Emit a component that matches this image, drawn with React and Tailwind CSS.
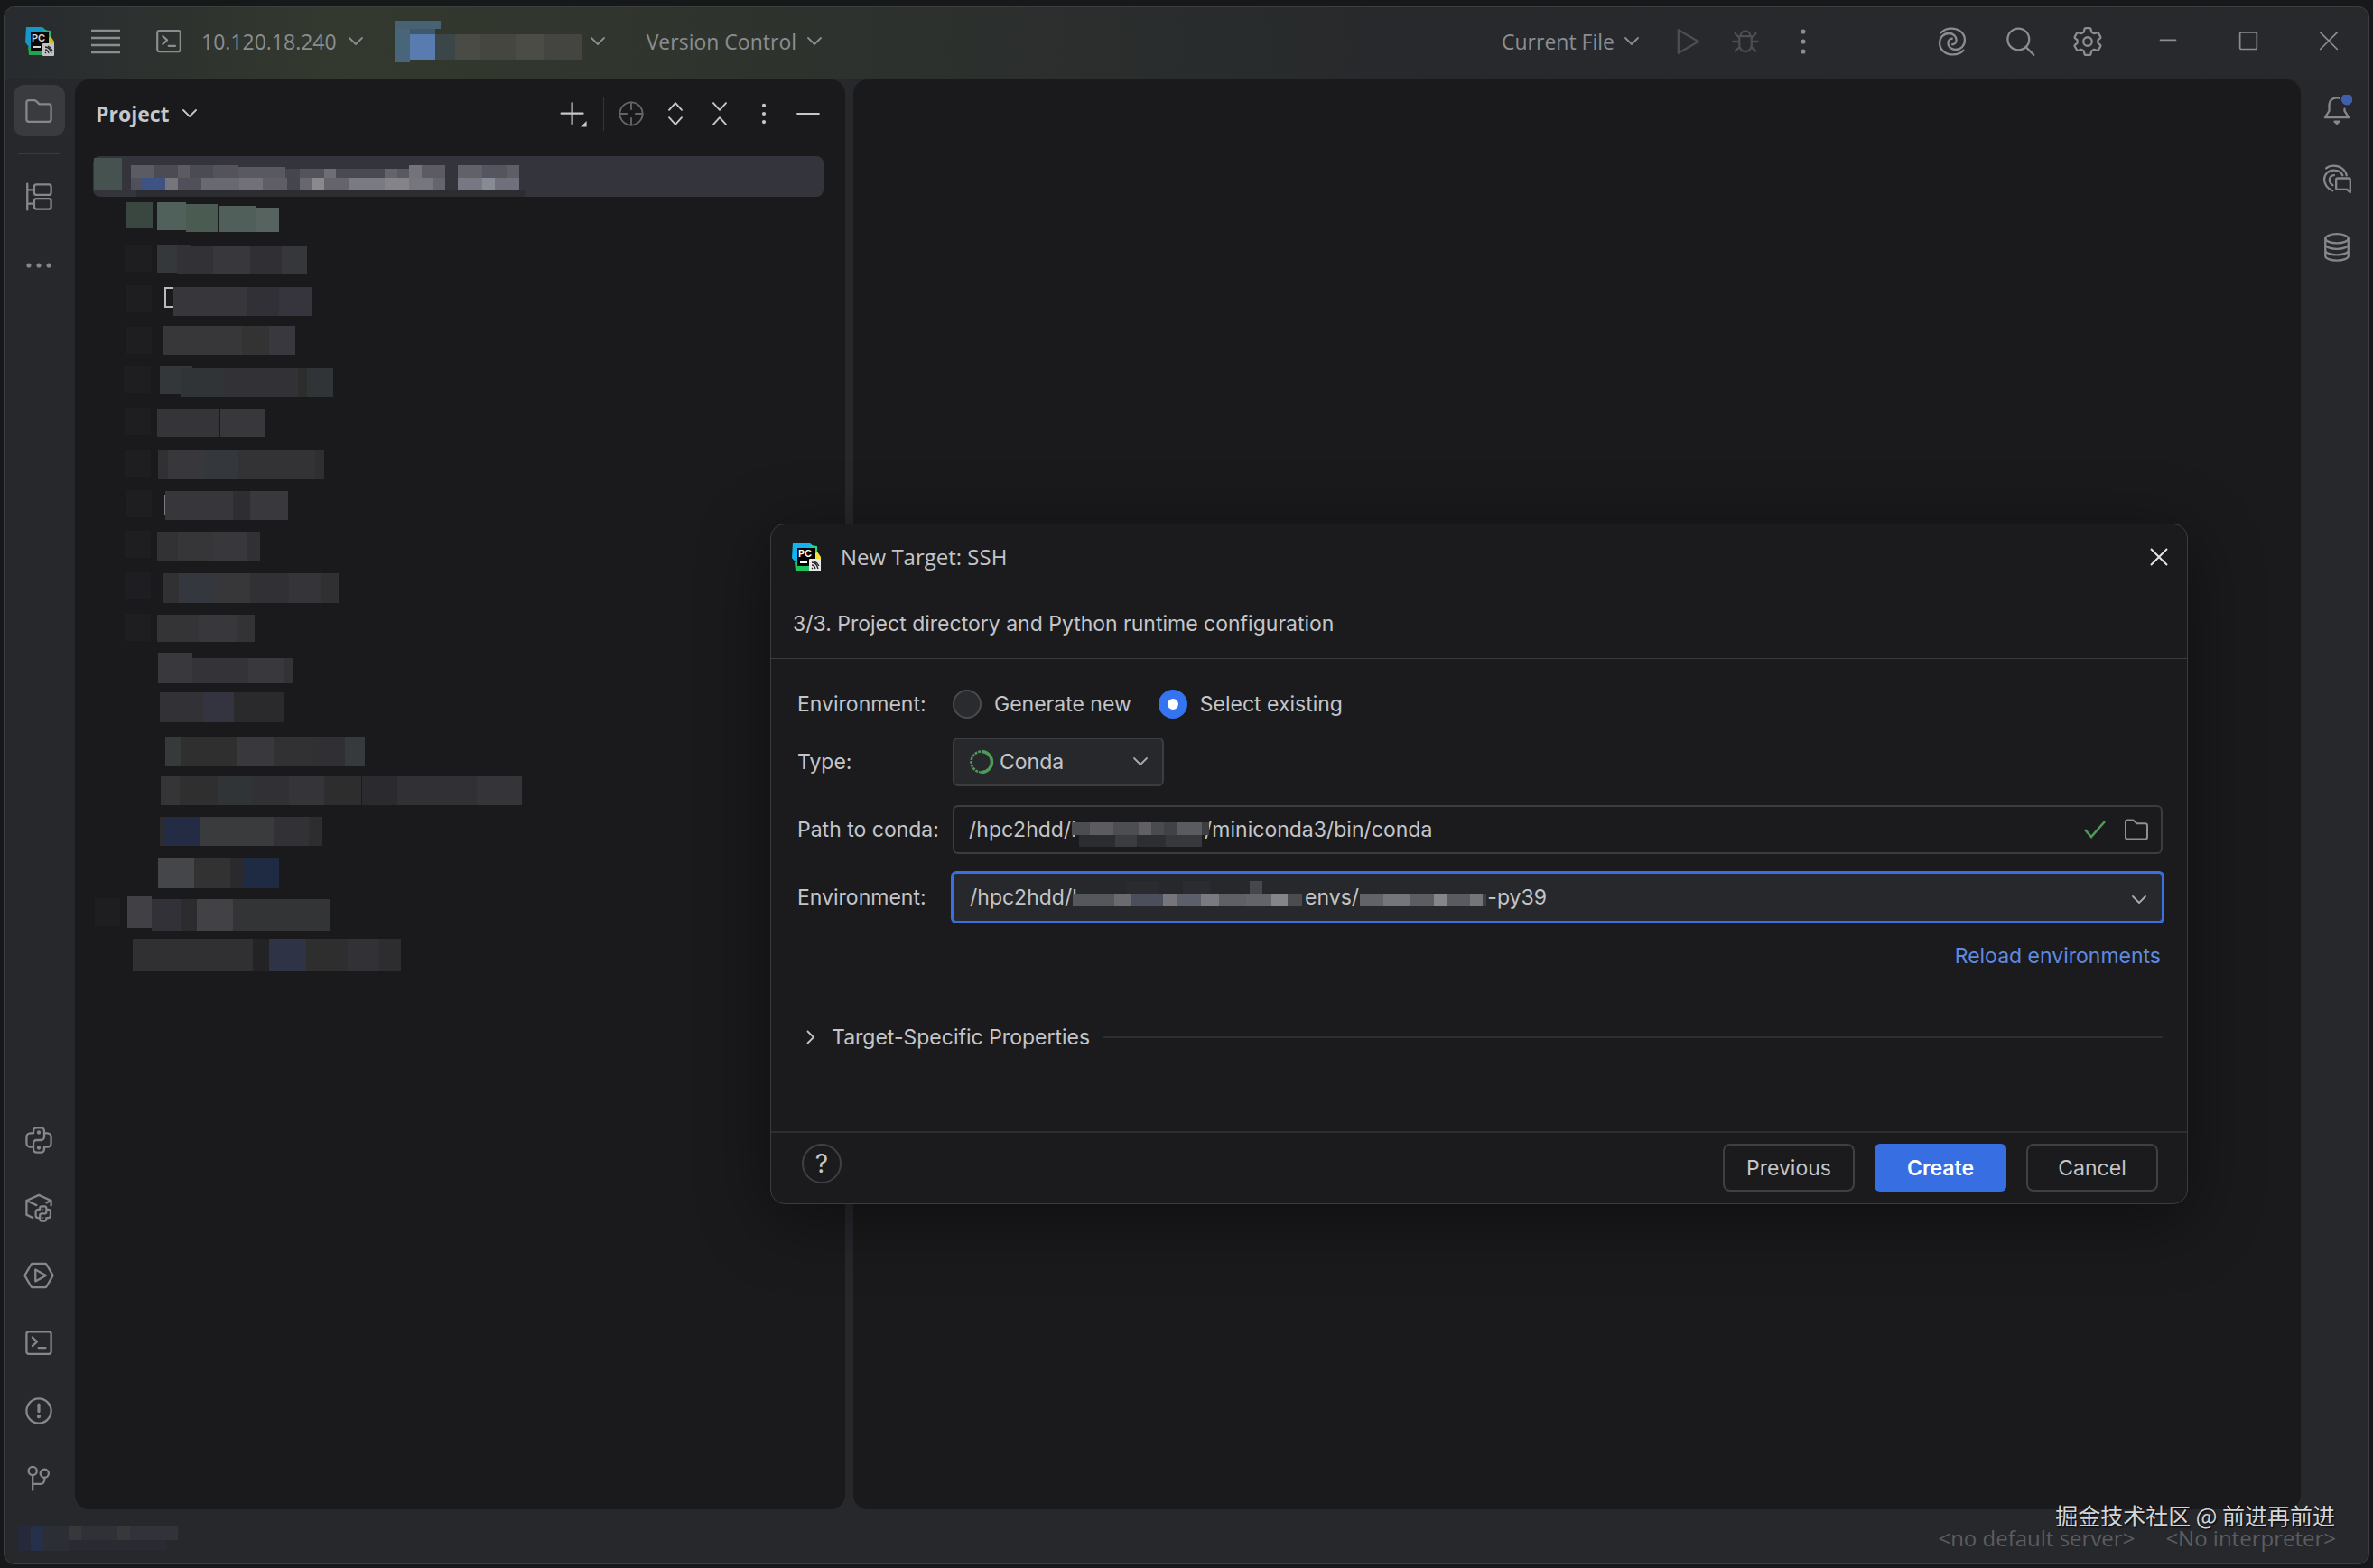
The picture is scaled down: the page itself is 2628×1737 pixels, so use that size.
import React from "react";

/* ===== ICONS ===== */

function Icon({ className = "size-[34px]", box = 20, children }) {
  return (
    <svg
      className={`${className} shrink-0`}
      viewBox={`0 0 ${box} ${box}`}
      fill="none"
      stroke="currentColor"
      strokeWidth="1.35"
      strokeLinecap="round"
      strokeLinejoin="round"
      aria-hidden="true"
    >
      {children}
    </svg>
  );
}

function Chevron({ className = "text-[#8b8d90]" }) {
  return (
    <svg className={`w-4 h-[10px] shrink-0 ${className}`} viewBox="0 0 16 10" fill="none" stroke="currentColor" strokeWidth="1.8" strokeLinecap="round" strokeLinejoin="round" aria-hidden="true">
      <path d="M1 1l7 7 7-7" />
    </svg>
  );
}

function ProductLogo({ className = "" }) {
  return (
    <svg className={`size-8 shrink-0 ${className}`} viewBox="0 0 32 32" aria-hidden="true">
      <path d="M1 0h18l6 5-3 18L4 22 0 17z" fill="#12b3ee" />
      <path d="M19 3l9 1v10l-4 10-20-2v9h16l10-14z" fill="#21d789" />
      <path d="M28 10l4 6v8l-6 4-2-14z" fill="#f0e13c" />
      <path d="M3 22l20-2-2 11H4z" fill="#1fc35c" />
      <rect x="6" y="6" width="20" height="20" fill="#000" />
      <text x="7" y="16" fontSize="11" fontWeight="600" fontFamily="Inter, sans-serif" fill="#fff">PC</text>
      <rect x="9" y="21" width="8" height="2" fill="#fff" />
      <rect x="19" y="18" width="13" height="14" rx="1" fill="#e8e8ea" />
      <path d="M22 22c4 0 6 3 7 7M22 25c3 0 3 2 4 4M22 28l1 1M25 21c3 1 4 3 5 5" stroke="#222" strokeWidth="1.3" fill="none" />
    </svg>
  );
}

function FolderIcon({ className }) {
  return (
    <Icon className={className}>
      <path d="M2 15.5v-11A1.5 1.5 0 0 1 3.5 3h3.600c.4 0 .8.2 1.1.5L10.300 5.500h6.200A1.500 1.500 0 0 1 18 7v8.500a1.500 1.500 0 0 1-1.500 1.500h-13A1.500 1.500 0 0 1 2 15.500z" />
    </Icon>
  );
}

function StructureIcon() {
  return (
    <Icon>
      <rect x="7" y="2" width="11" height="6.800" rx="1.500" />
      <rect x="7" y="11.200" width="11" height="6.800" rx="1.500" />
      <path d="M2.500 1.500v17M2.500 5.500H7M2.500 14.500H7" />
    </Icon>
  );
}

const snake =
  "M6.500 5.500V4A2 2 0 0 1 8.500 2h3a2 2 0 0 1 2 2v4a2 2 0 0 1-2 2h-3a2 2 0 0 0-2 2v2.500H4.500a2.500 2.500 0 0 1-2.500-2.500V8a2.500 2.500 0 0 1 2.500-2.500zM13.500 5.500h2A2.500 2.500 0 0 1 18 8v4a2.500 2.500 0 0 1-2.500 2.500h-2V16a2 2 0 0 1-2 2h-3a2 2 0 0 1-2-2v-1.500";

function PythonIcon() {
  return (
    <Icon>
      <path d={snake} />
      <circle cx="10" cy="5" r=".6" fill="currentColor" />
      <circle cx="10" cy="15" r=".6" fill="currentColor" />
    </Icon>
  );
}

function PackagesIcon() {
  return (
    <Icon>
      <path d="M6 16.500l-4-2V5.300l8-3.600 8 3.600v3.200M2 5.300l6.500 3M18 5.300l-3 1.400" />
      <g transform="translate(6.800 7.800) scale(.6)" strokeWidth="2.200">
        <path d={snake} />
        <circle cx="10" cy="5.500" r=".7" fill="currentColor" stroke="none" />
        <circle cx="10" cy="14.500" r=".7" fill="currentColor" stroke="none" />
      </g>
    </Icon>
  );
}

function ServicesIcon() {
  return (
    <Icon>
      <path d="M5.900 2.300h8.200c.3 0 .7.2.9.500l3.900 6.700c.2.300.2.700 0 1L15 17.200c-.2.300-.6.500-.9.500H5.900c-.3 0-.7-.2-.9-.500L1.100 10.500c-.2-.3-.2-.7 0-1L5 2.800c.2-.3.600-.5.900-.5z" />
      <path d="M7.800 6.200v7.600l6.800-3.800z" />
    </Icon>
  );
}

function TerminalIcon({ className }) {
  return (
    <Icon className={className}>
      <rect x="2" y="2.500" width="16" height="14.500" rx="1.500" />
      <path d="M5.800 6.200l3 2.800-3 2.800M9.800 13h4.600" />
    </Icon>
  );
}

function ProblemsIcon() {
  return (
    <Icon>
      <circle cx="10" cy="10" r="8" />
      <path d="M10 6v4.300" strokeWidth="1.900" />
      <circle cx="10" cy="13.600" r=".6" fill="currentColor" />
    </Icon>
  );
}

function BranchIcon() {
  return (
    <Icon>
      <circle cx="6" cy="5" r="2.700" />
      <circle cx="13.700" cy="6.600" r="2.700" />
      <path d="M6 7.700V17.500M6 13.500h5a2.700 2.700 0 0 0 2.700-2.700V9.300" />
    </Icon>
  );
}

function DotsIcon({ vertical, className }) {
  return (
    <Icon className={className}>
      <g fill="currentColor" stroke="none">
        {[3.500, 10, 16.500].map((p) => (
          <circle key={p} cx={vertical ? 10 : p} cy={vertical ? p : 10} r="1.500" />
        ))}
      </g>
    </Icon>
  );
}

const swirlArm = "M2.700 4.300C4.300 2.500 6.700 1.500 9.500 1.500c5 0 8.700 3.200 8.700 7.500 0 3.600-2.600 6.300-6 6.300-2.900 0-4.900-1.900-4.900-4.300 0-1.700 1.100-2.900 2.600-2.900";

function SwirlIcon() {
  return (
    <Icon>
      <path d={swirlArm} />
      <path d={swirlArm} transform="rotate(180 10 10)" />
    </Icon>
  );
}

function AiChatIcon() {
  return (
    <Icon>
      <path d="M3 3.200C4.300 2.100 6 1.600 8 1.600c4.200 0 7.500 2.400 8.300 6.200" />
      <path d="M7.200 17.800C4 16.700 1.800 13.700 1.800 10.500c0-3.500 2.700-6 6.200-6 2.800 0 4.900 1.400 5.700 3.300" />
      <path d="M7.300 14.200C6 13.500 5.200 12.200 5.200 10.800c0-1.800 1.300-3.100 3-3.100" />
      <path d="M10.500 9.700h7.200c.6 0 1 .4 1 1v8.200l-2.200-1.900h-6c-.6 0-1-.4-1-1v-5.300c0-.6.400-1 1-1z" />
    </Icon>
  );
}

function BellIcon() {
  return (
    <Icon>
      <path d="M11.500 2.200C7.500 1.200 5 3.800 5 7v3.500l-2.700 4.300h15.400L15 10.500V9.200" />
      <path d="M8.500 17.500h3l-1.500 1.300z" fill="currentColor" />
      <circle cx="16.500" cy="3" r="3.700" fill="#4060ab" stroke="none" />
    </Icon>
  );
}

function DatabaseIcon() {
  return (
    <Icon>
      <ellipse cx="10" cy="4.300" rx="7.500" ry="3" />
      <path d="M2.500 4.300v11.400c0 1.600 3.400 2.900 7.500 2.900s7.500-1.300 7.500-2.900V4.300M2.500 8.200c0 1.600 3.400 2.900 7.500 2.900s7.500-1.300 7.500-2.900M2.500 12c0 1.600 3.400 2.900 7.500 2.900s7.500-1.300 7.500-2.900" />
    </Icon>
  );
}

function GearIcon() {
  return (
    <Icon>
      <circle cx="10" cy="10" r="2.800" />
      <path d="M8.600 1.200h2.800c.3 0 .5.200.6.500l.5 2.100 1.700 1 2.100-.6c.3-.1.6 0 .7.300l1.400 2.400c.1.300.1.600-.1.800L16.700 9.100v1.800l1.600 1.400c.2.200.2.500.1.800L17 15.500c-.1.300-.4.400-.7.300l-2.100-.6-1.700 1-.5 2.100c-.1.300-.3.500-.6.500H8.600c-.3 0-.5-.2-.6-.5l-.5-2.100-1.700-1-2.100.6c-.3.100-.6 0-.7-.3l-1.400-2.400c-.1-.3-.1-.6.1-.8l1.600-1.400V9.100L1.700 7.700c-.2-.2-.2-.5-.1-.8L3 4.500c.1-.3.4-.4.700-.3l2.100.6 1.700-1L8 1.700c.1-.3.300-.5.600-.5z" />
    </Icon>
  );
}

function BugIcon() {
  return (
    <Icon>
      <path d="M7 6.200a3 3 0 0 1 6 0M6 6.500h8v6a4 4 0 0 1-8 0zM6 10H2M18 10h-4M6 7.500L3.200 4.700M14 7.500l2.800-2.800M6.300 13.500l-3 2.700M13.700 13.500l3 2.700" />
    </Icon>
  );
}

function IconButton({ label, children, className = "" }) {
  return (
    <button type="button" aria-label={label} title={label} className={`flex shrink-0 items-center justify-center ${className}`}>
      {children}
    </button>
  );
}

/* ===== PIXELATED NAMES ===== */

// cells: [x, y, width, height, fill]
function Mosaic({ width, height, cells, className = "" }) {
  return (
    <svg className={`shrink-0 ${className}`} width={width} height={height} viewBox={`0 0 ${width} ${height}`} shapeRendering="crispEdges" aria-hidden="true">
      {cells.map(([x, y, w, h, fill], i) => (
        <rect key={i} x={x} y={y} width={w} height={h} fill={fill} />
      ))}
    </svg>
  );
}

const faint = "#1e1e20";

const treeRows = [
  [
    [37, 6, 29, 29, "#3a4741"],
    [71, 6, 32, 31, "#50605a"], [103, 8, 35, 31, "#4a5c52"], [139, 10, 41, 29, "#515f5a"], [180, 12, 26, 27, "#56635e"],
  ],
  [
    [35, 7, 30, 30, faint],
    [71, 7, 22, 31, "#35383b"], [93, 7, 16, 32, "#323236"], [109, 9, 24, 30, "#323236"], [133, 9, 41, 30, "#38373c"], [174, 9, 35, 30, "#302f34"], [209, 9, 28, 30, "#35373b"],
  ],
  [
    [36, 7, 29, 30, faint],
    [79, 9, 10, 2, "#b9babd"], [79, 9, 2, 23, "#b9babd"], [79, 30, 10, 2, "#b9babd"],
    [89, 9, 82, 32, "#37363b"], [171, 9, 35, 32, "#313036"], [206, 9, 36, 32, "#36353e"],
  ],
  [
    [36, 7, 29, 30, faint],
    [77, 6, 88, 32, "#37373a"], [165, 6, 30, 32, "#333334"], [195, 6, 29, 32, "#39383e"],
  ],
  [
    [34, 5, 30, 30, faint],
    [74, 5, 36, 32, "#34373a"], [98, 8, 46, 32, "#313437"], [144, 8, 83, 32, "#323236"], [227, 8, 10, 32, "#2c2d2d"], [237, 8, 29, 32, "#313436"],
  ],
  [
    [35, 7, 29, 30, faint],
    [71, 8, 68, 31, "#353438"], [141, 8, 50, 31, "#38373b"],
  ],
  [
    [35, 7, 29, 30, faint],
    [72, 8, 11, 32, "#313134"], [83, 8, 40, 32, "#38383c"], [123, 8, 38, 32, "#34373b"], [161, 8, 85, 32, "#333336"], [246, 8, 10, 32, "#2f2f31"],
  ],
  [
    [36, 7, 29, 30, faint],
    [79, 12, 1, 23, "#7a7b7d"], [80, 8, 75, 32, "#37363a"], [155, 8, 19, 32, "#2e2d32"], [174, 8, 42, 32, "#39383c"],
  ],
  [
    [35, 6, 29, 30, "#1e1e21"],
    [71, 7, 23, 32, "#323234"], [94, 7, 39, 32, "#363638"], [133, 7, 38, 32, "#38373b"], [171, 7, 14, 32, "#313135"],
  ],
  [
    [35, 7, 29, 30, "#1e1e22"],
    [77, 8, 18, 33, "#313133"], [95, 8, 41, 33, "#34373d"], [136, 8, 38, 33, "#373739"], [174, 8, 43, 33, "#313135"], [217, 8, 36, 33, "#353438"], [253, 8, 19, 33, "#303032"],
  ],
  [
    [35, 8, 29, 30, faint],
    [71, 9, 46, 30, "#343436"], [117, 9, 42, 30, "#38373b"], [159, 9, 20, 30, "#333336"],
  ],
  [
    [72, 5, 38, 34, "#39383d"], [110, 11, 62, 28, "#343338"], [172, 11, 39, 28, "#39383d"], [211, 11, 11, 28, "#333235"],
  ],
  [
    [74, 4, 48, 33, "#323236"], [122, 4, 34, 33, "#33343f"], [156, 4, 56, 33, "#2a2a2c"],
  ],
  [
    [80, 7, 17, 33, "#363a3b"], [97, 7, 62, 33, "#2f2f30"], [159, 7, 41, 33, "#39383c"], [200, 7, 44, 33, "#313133"], [244, 7, 35, 33, "#302f33"], [279, 7, 22, 33, "#373a3d"],
  ],
  [
    [75, 6, 21, 32, "#353437"], [96, 6, 42, 32, "#2f2f2f"], [138, 6, 38, 32, "#303436"], [176, 6, 41, 32, "#303035"], [217, 6, 39, 32, "#353438"], [256, 6, 41, 32, "#2d2d2e"], [298, 6, 39, 32, "#2b2a2e"], [337, 6, 88, 32, "#313035"], [425, 6, 50, 32, "#353439"],
  ],
  [
    [74, 6, 4, 32, "#2c2c2d"], [78, 6, 41, 32, "#232b45"], [119, 6, 81, 32, "#3a3b3c"], [200, 6, 39, 32, "#323136"], [239, 6, 15, 32, "#2d2c2f"],
  ],
  [
    [72, 6, 40, 33, "#454649"], [112, 6, 40, 33, "#323233"], [152, 6, 15, 33, "#2a2a2e"], [167, 6, 39, 33, "#1f2b42"],
  ],
  [
    [2, 5, 28, 31, "#1e1e20"],
    [38, 3, 27, 35, "#414045"], [65, 6, 32, 35, "#323137"], [97, 6, 18, 35, "#2c2c2f"], [115, 6, 40, 35, "#424145"], [155, 6, 108, 35, "#323436"],
  ],
  [
    [44, 4, 133, 36, "#302f32"], [177, 4, 18, 36, "#232325"], [195, 4, 41, 36, "#2f3346"], [236, 4, 46, 36, "#2e2e2f"], [282, 4, 35, 36, "#323135"], [317, 4, 24, 36, "#2d2d2f"],
  ],
];

const rootCells = [
  [48, 37, 430, 8, "#2c2d31"],
  [1, 2, 31, 36, "#45524f"],
  [42, 10, 25, 14, "#5b5b62"], [67, 10, 27, 14, "#4c4b54"], [94, 10, 13, 14, "#5c5b61"], [107, 10, 26, 14, "#4b4b53"], [133, 10, 28, 14, "#54535b"], [161, 12, 52, 12, "#5a5962"], [213, 14, 16, 10, "#47464d"], [229, 14, 27, 10, "#54545a"], [256, 14, 13, 10, "#6f6e76"], [269, 14, 54, 10, "#4b4a52"], [323, 14, 14, 10, "#65646d"], [337, 14, 13, 10, "#5a5961"], [350, 10, 14, 14, "#74737a"], [364, 10, 26, 14, "#5c5b63"], [404, 10, 27, 14, "#61616a"], [431, 10, 27, 14, "#55555f"], [458, 10, 14, 14, "#5e5e67"],
  [42, 24, 11, 13, "#50505a"], [53, 24, 27, 13, "#3f5286"], [80, 24, 14, 13, "#76757b"], [94, 24, 26, 13, "#51505a"], [120, 24, 42, 13, "#696971"], [162, 24, 26, 13, "#72717a"], [188, 24, 27, 13, "#5f5e67"], [215, 24, 14, 13, "#45454d"], [229, 24, 14, 13, "#68676f"], [243, 24, 13, 13, "#8a898e"], [256, 24, 27, 13, "#65646d"], [283, 24, 40, 13, "#7a7a82"], [323, 24, 27, 13, "#84838a"], [350, 24, 26, 13, "#76767e"], [376, 24, 14, 13, "#64656f"], [404, 24, 27, 13, "#777883"], [431, 24, 14, 13, "#888b94"], [445, 24, 27, 13, "#6f707b"],
];

const projectCells = [
  [0, 0, 50, 9, "#466273"], [0, 9, 16, 37, "#48657a"], [16, 15, 28, 28, "#587caf"], [16, 9, 28, 6, "#3f596a"], [44, 15, 22, 28, "#3a4647"],
  [66, 15, 28, 28, "#4a4b45"], [94, 15, 40, 28, "#454640"], [134, 15, 30, 28, "#4c4c47"], [164, 15, 42, 28, "#444540"],
];

const condaCells = [
  [0, 0, 20, 14, "#4c4d50"], [20, 0, 26, 14, "#5b5b60"], [46, 0, 28, 14, "#4d4e52"], [74, 0, 14, 14, "#606065"], [88, 0, 14, 14, "#4a4b4f"], [102, 0, 14, 14, "#414246"], [116, 0, 28, 14, "#5a5b60"], [144, 0, 8, 14, "#3d3e42"],
  [8, 14, 40, 13, "#2b2c2f"], [48, 14, 24, 13, "#3b3c3f"], [72, 14, 32, 13, "#2d2e31"], [104, 14, 40, 13, "#37383b"],
];

const envCells = [
  [60, -14, 36, 14, "#2a2b2f"], [122, -14, 30, 14, "#2b2c31"], [196, -14, 14, 14, "#46474d"],
  [0, 0, 46, 14, "#56575c"], [46, 0, 18, 14, "#6a6a6f"], [64, 0, 36, 14, "#4b4f5b"], [100, 0, 16, 14, "#75767c"], [116, 0, 26, 14, "#5a5f69"], [142, 0, 20, 14, "#7a7b80"], [162, 0, 30, 14, "#5f6066"], [192, 0, 28, 14, "#63646a"], [220, 0, 18, 14, "#84858a"], [238, 0, 16, 14, "#4b4c50"],
];

const envNameCells = [
  [0, 0, 26, 14, "#626369"], [26, 0, 30, 14, "#75767b"], [56, 0, 26, 14, "#5c5d63"], [82, 0, 14, 14, "#85868a"], [96, 0, 26, 14, "#5a5b61"], [122, 0, 14, 14, "#74757a"], [136, 0, 4, 14, "#3d3e42"],
];

const statusCells = [
  [0, 0, 14, 28, "#26293a"], [14, 0, 14, 28, "#27304a"], [28, 0, 28, 28, "#2c2e36"], [56, 0, 14, 16, "#37383b"], [70, 0, 40, 16, "#303136"], [110, 0, 14, 16, "#37383a"], [124, 0, 53, 16, "#32333a"], [56, 16, 108, 12, "#2a2b32"],
];

/* ===== DIALOG ===== */

function NewTargetDialog() {
  return (
    <section
      role="dialog"
      aria-labelledby="dialog-title"
      className="absolute left-[853px] right-[205px] top-[580px] flex flex-col rounded-2xl border border-[#3a3b3e] bg-[#1b1b1d] text-[23px] leading-[30px] text-[#c3c5c9] shadow-[0_16px_80px_rgba(0,0,0,0.45)]"
    >
      <header className="flex h-[72px] items-center pl-[23px] pr-5">
        <ProductLogo />
        <h2 id="dialog-title" className="ml-[22px] font-['Open_Sans','Noto_Sans',sans-serif] text-2xl">New Target: SSH</h2>
        <IconButton label="Close" className="ml-auto text-[#e4e5e7]">
          <svg className="size-[22px]" viewBox="0 0 22 22" fill="none" stroke="currentColor" strokeWidth="2" aria-hidden="true">
            <path d="M2 2l18 18M20 2L2 20" />
          </svg>
        </IconButton>
      </header>
      <div className="flex h-[77px] items-center border-b border-[#3a3b3e] pl-6">
        <p>3/3. Project directory and Python runtime configuration</p>
      </div>

      <form className="pl-[29px] pr-[27px] pt-[34px]">
        <div className="grid grid-cols-[172px_1fr] items-center gap-y-[21px]">
          {/* Environment mode */}
          <span id="env-mode">Environment:</span>
          <div role="radiogroup" aria-labelledby="env-mode" className="flex items-center gap-[30px]">
            <label className="flex items-center gap-[14px]">
              <input type="radio" name="mode" className="size-8 appearance-none rounded-full border-2 border-[#4a4b4f] bg-[#2a2b2e]" />
              Generate new
            </label>
            <label className="flex items-center gap-[14px]">
              <input type="radio" name="mode" defaultChecked className="size-8 appearance-none rounded-full border-[10px] border-[#3574f0] bg-white" />
              Select existing
            </label>
          </div>

          {/* Type */}
          <label htmlFor="env-type">Type:</label>
          <div className="relative w-[234px]">
            <select id="env-type" className="h-[54px] w-full appearance-none rounded-md border-2 border-[#3c3d41] bg-[#27282c] pl-[50px]">
              <option>Conda</option>
            </select>
            <svg className="pointer-events-none absolute left-[18px] top-[13px] size-7" viewBox="0 0 28 28" fill="none" stroke="#4f9a5a" aria-hidden="true">
              <path d="M14 2.500a11.500 11.500 0 0 1 0 23" strokeWidth="3.500" />
              <path d="M14 25.500a11.500 11.500 0 0 1 0-23" strokeWidth="2.500" strokeDasharray="3 1" />
            </svg>
            <Chevron className="pointer-events-none absolute right-[18px] top-[22px] text-[#a8aaae]" />
          </div>

          {/* Path to conda */}
          <label htmlFor="conda-path">Path to conda:</label>
          <div className="relative">
            <input
              id="conda-path"
              type="text"
              defaultValue={"/hpc2hdd/l" + "\u00a0".repeat(22) + "/miniconda3/bin/conda"}
              className="h-[54px] w-full rounded-md border-2 border-[#3c3d41] bg-transparent pl-4 pr-24 outline-none"
            />
            <Mosaic width={152} height={28} cells={condaCells} className="pointer-events-none absolute left-[132px] top-[19px]" />
            <div className="absolute right-[14px] top-3 flex items-center gap-[18px] text-[#8d8f93]">
              <svg className="h-[22px] w-[26px] text-[#4f9a5a]" viewBox="0 0 26 22" fill="none" stroke="currentColor" strokeWidth="2.600" aria-hidden="true">
                <path d="M2 11l7 8L24 2" />
              </svg>
              <IconButton label="Browse"><FolderIcon className="size-[30px]" /></IconButton>
            </div>
          </div>

          {/* Conda environment */}
          <label htmlFor="conda-env">Environment:</label>
          <div className="relative">
            <select id="conda-env" className="h-[54px] w-full appearance-none rounded-sm border border-[#3871e1] bg-[#27282c] pl-[18px] ring-2 ring-[#3871e1]">
              <option>{"/hpc2hdd/l" + "\u00a0".repeat(39) + "envs/" + "\u00a0".repeat(22) + "-py39"}</option>
            </select>
            <Mosaic width={254} height={14} cells={envCells} className="pointer-events-none absolute left-[133px] top-[23px] overflow-visible" />
            <Mosaic width={140} height={14} cells={envNameCells} className="pointer-events-none absolute left-[451px] top-[23px]" />
            <Chevron className="pointer-events-none absolute right-[18px] top-[25px] text-[#a8aaae]" />
          </div>
        </div>

        <div className="mt-[23px] flex justify-end">
          <a href="#reload" className="pr-[2px] text-[#5f8ae0]">Reload environments</a>
        </div>

        <div className="mt-[60px] flex items-center">
          <button type="button" aria-expanded="false" className="flex items-center gap-[18px] pl-[10px]">
            <svg className="h-4 w-[10px]" viewBox="0 0 10 16" fill="none" stroke="currentColor" strokeWidth="1.800" aria-hidden="true">
              <path d="M1 1l7 7-7 7" />
            </svg>
            Target-Specific Properties
          </button>
          <div className="ml-[14px] h-[2px] flex-1 bg-[#2d2e31]" />
        </div>
      </form>

      <footer className="mt-[89px] flex items-start gap-[22px] border-t-2 border-[#2d2e31] pb-[13px] pl-[34px] pr-8 pt-3">
        <button type="button" aria-label="Help" className="mr-auto size-11 rounded-full border-2 border-[#3f4044] text-[28px] leading-10">?</button>
        <button type="button" className="h-[53px] w-[146px] rounded-lg border-2 border-[#3f4044]">Previous</button>
        <button type="button" className="h-[53px] w-[146px] rounded-md bg-[#376fe3] font-semibold text-white">Create</button>
        <button type="button" className="h-[53px] w-[146px] rounded-lg border-2 border-[#3f4044]">Cancel</button>
      </footer>
    </section>
  );
}

/* ===== MAIN WINDOW ===== */

function TitleBar() {
  return (
    <header className="flex h-20 shrink-0 items-center rounded-t-xl bg-linear-to-r from-[#282b2f] via-[#33392e] via-14% to-[#27292c] to-60% pb-1 pl-[23px] pr-[27px] font-['Open_Sans','Noto_Sans',sans-serif] text-[23px] text-[#8b8d90]">
      <ProductLogo className="opacity-80" />
      <IconButton label="Main menu" className="ml-[41px]">
        <svg className="h-7 w-8" viewBox="0 0 32 28" stroke="currentColor" strokeWidth="2.500" aria-hidden="true">
          <path d="M0 2h32M0 10h32M0 18h32M0 26h32" />
        </svg>
      </IconButton>
      <button type="button" className="ml-[38px] flex items-center">
        <TerminalIcon className="size-8" />
        <span className="ml-5">10.120.18.240</span>
        <Chevron className="ml-[13px]" />
      </button>
      <button type="button" aria-label="Project" className="ml-9 flex items-center gap-[10px]">
        <Mosaic width={206} height={46} cells={projectCells} />
        <Chevron />
      </button>
      <button type="button" className="ml-[46px] flex items-center gap-3">
        Version Control
        <Chevron />
      </button>

      <button type="button" className="ml-auto flex items-center gap-[11px]">
        Current File
        <Chevron />
      </button>
      <div className="ml-[37px] flex gap-[30px]">
        <IconButton label="Run" className="text-[#4c4e51]">
          <Icon><path d="M4 2.500v15L17 10z" /></Icon>
        </IconButton>
        <IconButton label="Debug" className="text-[#4c4e51]"><BugIcon /></IconButton>
        <IconButton label="More actions"><DotsIcon vertical /></IconButton>
      </div>
      <div className="ml-[131px] flex gap-[41px]">
        <IconButton label="AI Assistant"><SwirlIcon /></IconButton>
        <IconButton label="Search">
          <Icon><circle cx="9" cy="8.500" r="7" /><path d="M14 13.700l5 5" /></Icon>
        </IconButton>
        <IconButton label="Settings"><GearIcon /></IconButton>
      </div>
      <div className="ml-[55px] flex gap-[55px]">
        <IconButton label="Minimize"><Icon><path d="M5 9h10" strokeWidth="1" /></Icon></IconButton>
        <IconButton label="Maximize"><Icon><rect x="4.500" y="4" width="11" height="11" rx="1" strokeWidth="1" /></Icon></IconButton>
        <IconButton label="Close window"><Icon><path d="M4.500 4l11 11M15.500 4l-11 11" strokeWidth="1" /></Icon></IconButton>
      </div>
    </header>
  );
}

function ProjectPanel() {
  return (
    <section className="w-[853px] shrink-0 rounded-2xl bg-[#1a1a1c]">
      <div className="flex h-[76px] items-center pl-[23px] pr-[27px] text-[#c6c7ca]">
        <button type="button" className="flex items-center gap-[14px] font-['Open_Sans','Noto_Sans',sans-serif] text-[23px] font-bold">
          Project
          <Chevron className="text-[#c6c7ca]" />
        </button>
        <IconButton label="Add" className="ml-auto">
          <Icon className="size-8">
            <path d="M8.500 2.500v14.500M1 9.800h15" />
            <path d="M18.500 15v4h-4z" fill="currentColor" stroke="none" />
          </Icon>
        </IconButton>
        <div className="ml-4 h-[38px] w-px bg-[#333437]" />
        <div className="ml-4 flex gap-[21px]">
          <IconButton label="Select opened file" className="text-[#63656a]">
            <Icon className="size-7"><circle cx="10" cy="10" r="9" /><path d="M10 1v5.500M10 13.500V19M1 10h5.500M13.500 10H19" /></Icon>
          </IconButton>
          <IconButton label="Expand all">
            <Icon className="size-7"><path d="M5 7l5-5.500L15 7M5 13l5 5.500 5-5.500" /></Icon>
          </IconButton>
          <IconButton label="Collapse all">
            <Icon className="size-7"><path d="M5 1.500L10 7l5-5.500M5 18.500L10 13l5 5.500" /></Icon>
          </IconButton>
          <IconButton label="Options"><DotsIcon vertical className="size-7" /></IconButton>
          <IconButton label="Hide"><Icon className="size-7"><path d="M1.500 10h17" /></Icon></IconButton>
        </div>
      </div>

      {/* Tree */}
      <ul className="mt-[9px] grid h-[908px] auto-rows-fr pl-5 pr-6">
        <li className="rounded-lg bg-[#34353c]">
          <Mosaic width={480} height={45} cells={rootCells} />
        </li>
        {treeRows.map((cells, i) => (
          <li key={i}>
            <Mosaic width={480} height={45} cells={cells} />
          </li>
        ))}
      </ul>
    </section>
  );
}

function App() {
  return (
    <div className="relative flex min-h-screen flex-col bg-[#17181a] px-1 pb-1 pt-[7px] font-['Inter','Noto_Sans_CJK_SC',sans-serif]">
      <div className="flex flex-1 flex-col rounded-xl border border-[#3c3e40] bg-[#27282c]">
        <TitleBar />

        <main className="flex flex-1">
          {/* Left tool bar */}
          <nav className="flex w-[78px] shrink-0 flex-col items-center pb-[17px] pr-[2px] pt-[6px] text-[#85878b]">
            <IconButton label="Project" className="size-[57px] rounded-xl bg-[#3a3b3f]"><FolderIcon /></IconButton>
            <div className="mt-[18px] h-[2px] w-[46px] bg-[#3a3b3f]" />
            <IconButton label="Structure" className="mt-[30px]"><StructureIcon /></IconButton>
            <IconButton label="More tool windows" className="mt-[42px]"><DotsIcon /></IconButton>
            <div className="mt-auto flex flex-col gap-[41px]">
              <IconButton label="Python Console"><PythonIcon /></IconButton>
              <IconButton label="Python Packages"><PackagesIcon /></IconButton>
              <IconButton label="Services"><ServicesIcon /></IconButton>
              <IconButton label="Terminal"><TerminalIcon /></IconButton>
              <IconButton label="Problems"><ProblemsIcon /></IconButton>
              <IconButton label="Version Control"><BranchIcon /></IconButton>
            </div>
          </nav>

          <ProjectPanel />
          <section aria-label="Editor" className="ml-[9px] flex-1 rounded-2xl bg-[#1a1a1c]" />

          {/* Right tool bar */}
          <nav className="flex w-[75px] shrink-0 flex-col items-center gap-[42px] pl-1 pt-[17px] text-[#85878b]">
            <IconButton label="Notifications"><BellIcon /></IconButton>
            <IconButton label="AI Chat"><AiChatIcon /></IconButton>
            <IconButton label="Database"><DatabaseIcon /></IconButton>
          </nav>
        </main>

        {/* Status bar */}
        <footer className="flex h-[60px] shrink-0 items-center pl-[15px] pr-9 pt-1 font-['Open_Sans','Noto_Sans',sans-serif] text-2xl text-[#5b5c60]">
          <Mosaic width={177} height={28} cells={statusCells} />
          <button type="button" className="ml-auto">&lt;no default server&gt;</button>
          <button type="button" className="ml-[34px]">&lt;No interpreter&gt;</button>
        </footer>
      </div>

      <NewTargetDialog />

      <p className="absolute bottom-[43px] right-[42px] font-['Noto_Sans_CJK_SC',sans-serif] text-[25px] leading-[32px] text-[#d4d5d7] [text-shadow:1px_1px_2px_#000]">
        掘金技术社区 @ 前进再前进
      </p>
    </div>
  );
}

export default App;
